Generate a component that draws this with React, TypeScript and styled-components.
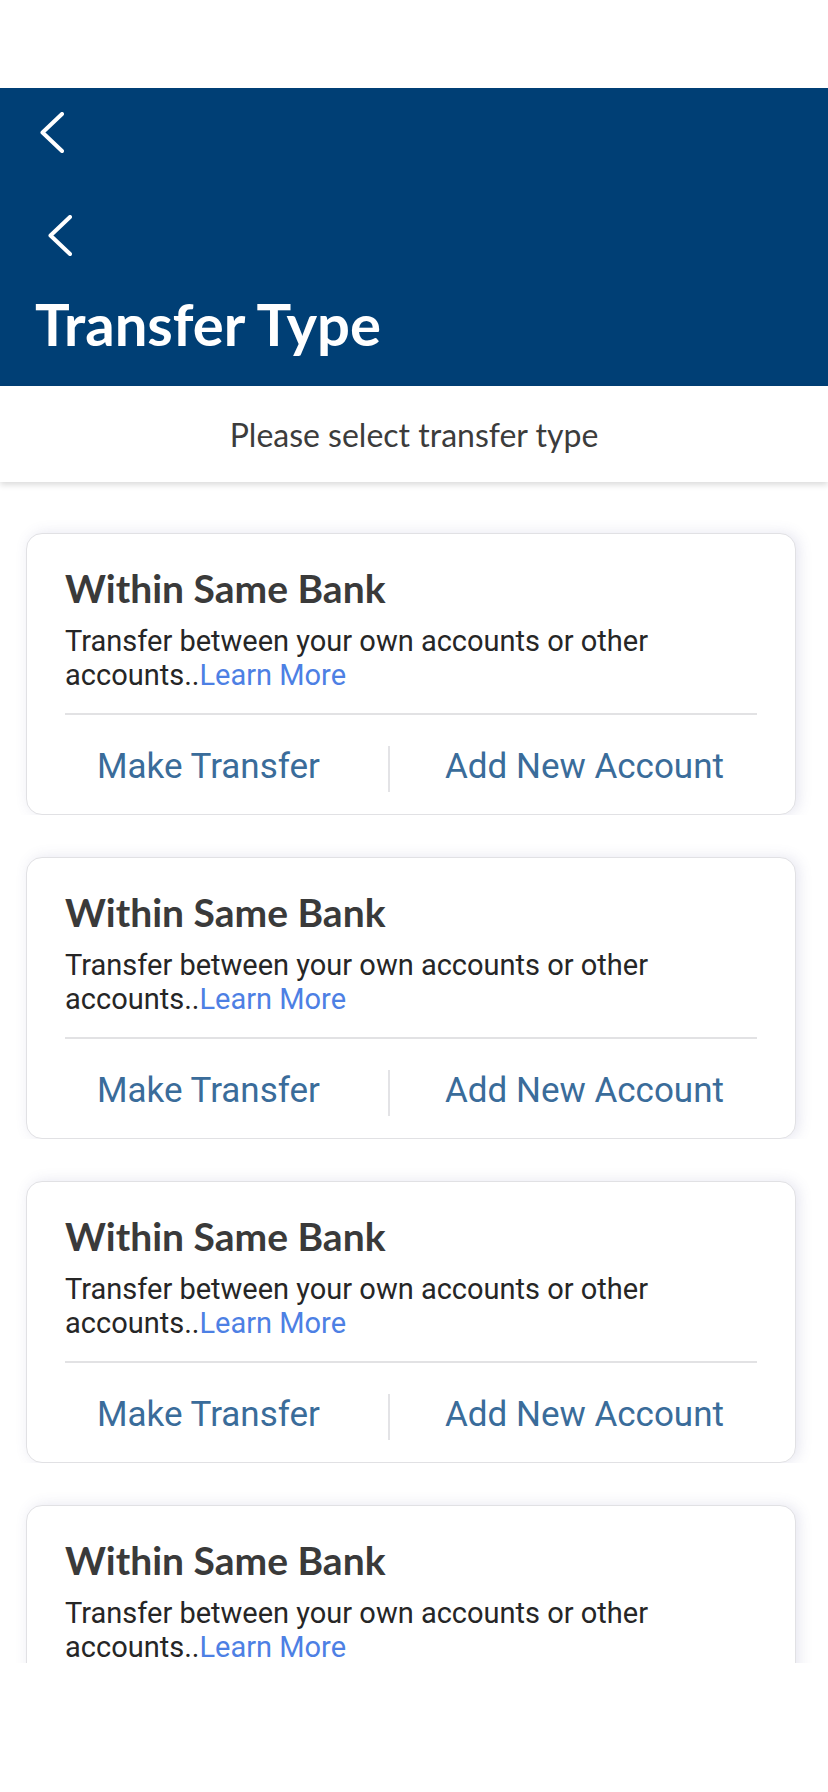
import React from "react";
import styled, { createGlobalStyle } from "styled-components";

const Global = createGlobalStyle`
  html, body { margin: 0; padding: 0; background: #ffffff; }
  * { box-sizing: border-box; }
`;

const Screen = styled.div`
  width: 828px;
  height: 1663px;
  overflow: hidden;
  display: flex;
  flex-direction: column;
  background: #ffffff;
`;

const StatusSpace = styled.div`
  height: 88px;
  flex-shrink: 0;
`;

const Header = styled.header`
  flex-shrink: 0;
  height: 298px;
  background: #003f75;
  display: flex;
  flex-direction: column;
  align-items: flex-start;
  padding-top: 24px;
`;

const BackButton = styled.button<{ $indent: number; $top: number }>`
  display: block;
  width: 24px;
  height: 41px;
  margin: ${(p) => p.$top}px 0 0 ${(p) => p.$indent}px;
  padding: 0;
  border: 0;
  background: none;
  cursor: pointer;
  svg {
    display: block;
  }
`;

const Title = styled.h1`
  margin: 39px 0 0 35px;
  font-family: Lato, "Open Sans", sans-serif;
  font-weight: 700;
  font-size: 58px;
  line-height: 58px;
  color: #ffffff;
`;

const SubHeader = styled.div`
  position: relative;
  z-index: 1;
  flex-shrink: 0;
  height: 96px;
  display: flex;
  align-items: center;
  justify-content: center;
  background: #ffffff;
  box-shadow: 0 3px 6px rgba(0, 0, 0, 0.14);
  font-family: Lato, "Open Sans", sans-serif;
  font-size: 32px;
  color: #3c3c3c;
`;

const CardList = styled.div`
  display: flex;
  flex-direction: column;
  gap: 42px;
  padding: 51px 32px 0 26px;
`;

const Card = styled.section`
  flex-shrink: 0;
  height: 282px;
  border: 1px solid #e1e1e4;
  border-radius: 16px;
  background: #ffffff;
  box-shadow: 3px 0 14px rgba(80, 80, 150, 0.15);
  clip-path: inset(-20px -24px 0 -20px);
  padding: 32px 38px 0 38px;
  display: flex;
  flex-direction: column;
`;

const CardTitle = styled.h2`
  margin: 0;
  font-family: Lato, "Open Sans", sans-serif;
  font-weight: 700;
  font-size: 39px;
  line-height: 44px;
  color: #3a3a3a;
`;

const Description = styled.p`
  margin: 14px 0 0 0;
  font-family: Roboto, sans-serif;
  font-size: 29px;
  line-height: 34px;
  color: #262626;
`;

const LearnMore = styled.a`
  color: #4d80e4;
  text-decoration: none;
  cursor: pointer;
`;

const Divider = styled.hr`
  margin: 21px 0 0 0;
  border: 0;
  height: 2px;
  background: #e2e2e4;
`;

const Actions = styled.div`
  display: flex;
  align-items: flex-start;
  margin-top: 31px;
  padding-left: 32px;
`;

const ActionButton = styled.button`
  padding: 0;
  border: 0;
  background: none;
  font-family: Roboto, sans-serif;
  font-size: 35px;
  line-height: 41px;
  color: #3a6c9a;
  cursor: pointer;
  white-space: nowrap;
`;

const ActionSeparator = styled.span`
  width: 2px;
  height: 46px;
  margin: 0 55px 0 68px;
  background: #e3e3e6;
`;

const Chevron = () => (
  <svg width="24" height="41" viewBox="0 0 24 41" fill="none">
    <polyline
      points="22,2 2.5,20.5 22,39"
      stroke="#ffffff"
      strokeWidth="4"
      strokeLinecap="round"
      strokeLinejoin="round"
    />
  </svg>
);

const TransferCard = () => (
  <Card>
    <CardTitle>Within Same Bank</CardTitle>
    <Description>
      Transfer between your own accounts or other accounts..
      <LearnMore>Learn More</LearnMore>
    </Description>
    <Divider />
    <Actions>
      <ActionButton>Make Transfer</ActionButton>
      <ActionSeparator />
      <ActionButton>Add New Account</ActionButton>
    </Actions>
  </Card>
);

export default function App() {
  return (
    <>
      <Global />
      <Screen>
        <StatusSpace />
        <Header>
          <BackButton $indent={40} $top={0} aria-label="Back">
            <Chevron />
          </BackButton>
          <BackButton $indent={48} $top={62} aria-label="Back">
            <Chevron />
          </BackButton>
          <Title>Transfer Type</Title>
        </Header>
        <SubHeader>Please select transfer type</SubHeader>
        <CardList>
          {[0, 1, 2, 3].map((i) => (
            <TransferCard key={i} />
          ))}
        </CardList>
      </Screen>
    </>
  );
}
